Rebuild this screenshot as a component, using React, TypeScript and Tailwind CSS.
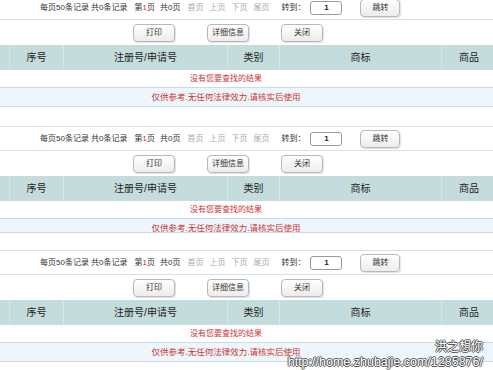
const FONT = "font-['Liberation_Sans','Noto_Sans_CJK_SC',sans-serif]"

const COLUMNS = ['', '序号', '注册号/申请号', '类别', '商标', '商品']

function Btn({ label }: { label: string }) {
  return (
    <button className="h-[18px] w-[42px] rounded-[4px] border border-[#b8b8b8] bg-linear-to-b from-white to-[#ececec] text-[8px] leading-none text-[#333] shadow-[1px_1px_1px_rgba(0,0,0,0.12)]">
      {label}
    </button>
  )
}

function Pager() {
  return (
    <div className="flex h-[24px] items-center border-b border-[#d3e3ea] pl-[40px] text-[8px] text-[#333]">
      <span>每页50条记录 共0条记录</span>
      <span className="ml-[7px]">
        第<span className="text-[#d22]">1</span>页
      </span>
      <span className="ml-[5px]">共0页</span>
      <span className="ml-[7px] text-[#aaa]">首页</span>
      <span className="ml-[6px] text-[#aaa]">上页</span>
      <span className="ml-[6px] text-[#aaa]">下页</span>
      <span className="ml-[6px] text-[#aaa]">尾页</span>
      <span className="ml-[12px]">转到：</span>
      <input
        readOnly
        value="1"
        className="ml-[5px] h-[14px] w-[32px] rounded-[3px] border border-[#999] bg-white text-center text-[8px] font-bold text-[#222] outline-none"
      />
      <button className="ml-[18px] h-[18px] w-[40px] rounded-[4px] border border-[#b8b8b8] bg-linear-to-b from-white to-[#ececec] text-[8px] leading-none text-[#333] shadow-[1px_1px_1px_rgba(0,0,0,0.12)]">
        跳转
      </button>
    </div>
  )
}

function Block({ row2 = 19, spacer = 19 }: { row2?: number; spacer?: number }) {
  return (
    <div className="border-t border-[#d3e3ea]">
      <Pager />
      <div className="flex h-[25px] items-center gap-[32px] pl-[133px]">
        <Btn label="打印" />
        <Btn label="详细信息" />
        <Btn label="关闭" />
      </div>
      <div className="grid h-[25px] grid-cols-[10px_54px_164px_52px_162px_54px] bg-[#c4dcdb] text-[10px] text-[#222]">
        {COLUMNS.map((c, i) => (
          <div
            key={i}
            className={`flex items-center justify-center ${i < 5 ? 'border-r border-[#d4e6e7]' : ''}`}
          >
            {c}
          </div>
        ))}
      </div>
      <div className="border-b border-[#c9dde6]">
        <div className="flex h-[17px] w-[452px] items-center justify-center text-[8px] text-[#c33]">
          没有您要查找的结果
        </div>
      </div>
      <div className="overflow-hidden border-b border-[#c9dde6] bg-[#eef6fb]" style={{ height: row2 }}>
        <div className="flex h-[19px] w-[452px] items-center justify-center text-[8.5px] text-[#c33]">
          仅供参考.无任何法律效力.请核实后使用
        </div>
      </div>
      <div style={{ height: spacer }} />
    </div>
  )
}

export default function App() {
  return (
    <div className={`relative h-[370px] w-[493px] overflow-hidden bg-white ${FONT}`}>
      <div className="-mt-[5px]">
        <Block />
        <Block row2={14} spacer={17} />
        <Block />
      </div>
      <div className="absolute right-[10px] top-[341px] text-[12px] leading-none text-white [text-shadow:1px_0_0_#555,-1px_0_0_#555,0_1px_0_#555,0_-1px_0_#555]">
        洪之想你
      </div>
      <div className="absolute right-[10px] top-[356px] text-[12.5px] leading-none text-white [text-shadow:1px_0_0_#555,-1px_0_0_#555,0_1px_0_#555,0_-1px_0_#555]">
        http://home.zhubajie.com/1285876/
      </div>
    </div>
  )
}
